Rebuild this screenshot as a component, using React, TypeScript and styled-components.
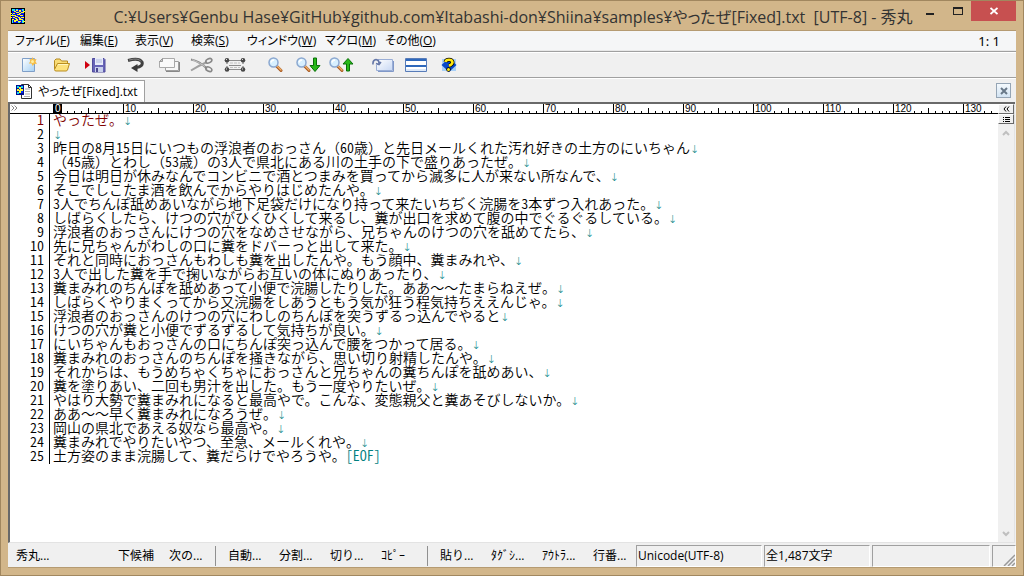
import React from "react";
import styled, { createGlobalStyle, css } from "styled-components";

const UI = `"Open Sans", "Noto Sans CJK JP", sans-serif`;

const GlobalStyle = createGlobalStyle`
  * { box-sizing: border-box; }
  body { margin: 0; background: #d2b68a; }
  button { font: inherit; color: inherit; border: 0; padding: 0; background: none; }
`;

const Window = styled.div`
  display: flex;
  flex-direction: column;
  min-height: 100vh;
  padding: 0 7px 7px;
  background: #d2b68a;
  border: 1px solid #a1875f;
  font-family: ${UI};
  font-size: 12px;
  color: #000;
`;

const TitleBar = styled.header`
  display: grid;
  grid-template-columns: 1fr auto 1fr;
  align-items: center;
  height: 29px;
  padding-left: 2px;
`;

const Title = styled.h1`
  margin: 2px 0 0;
  white-space: pre;
  font-family: ${UI};
  font-size: 16px;
  font-weight: 400;
  line-height: 24px;
  color: #333;
  font-feature-settings: "palt";
`;

const WindowButtons = styled.div`
  display: flex;
  align-self: flex-start;
  justify-self: end;
`;

const WindowButton = styled.button<{ $close?: boolean }>`
  display: flex;
  align-items: center;
  justify-content: center;
  width: ${(p) => (p.$close ? 45 : 27)}px;
  height: 20px;
  background: ${(p) => (p.$close ? "#c75050" : "none")};
`;

const Client = styled.div`
  flex: 1;
  display: flex;
  flex-direction: column;
  border-top: 1px solid #b59b72;
  border-bottom: 1px solid #b59b72;
  background: #f0f0f0;
`;

const MenuBar = styled.nav`
  display: flex;
  align-items: center;
  justify-content: space-between;
  height: 20px;
  padding: 0 16px 0 7px;
  background: #f5f6f7;
  border-bottom: 1px solid #e8e8e8;
`;

const MenuList = styled.div`
  display: grid;
  grid-template-columns: 65px 55px 56px 56px 78px 60px 60px;
`;

const MenuItem = styled.button`
  text-align: left;
  white-space: nowrap;
  line-height: 18px;
  font-feature-settings: "palt";
`;

const Caret = styled.span`
  font-family: "Noto Sans", sans-serif;
  font-size: 13px;
  line-height: 18px;
`;

const ToolBar = styled.div`
  display: flex;
  align-items: center;
  height: 27px;
  padding-left: 4px;
  border-top: 1px solid #a0a0a0;
  border-bottom: 1px solid #a0a0a0;
  box-shadow: inset 0 1px #fff;
`;

const ToolGroup = styled.div`
  display: flex;
  margin-right: 8px;
`;

const ToolButton = styled.button`
  display: flex;
  justify-content: center;
  align-items: center;
  width: 33px;
  height: 23px;
`;

const TabStrip = styled.div`
  display: flex;
  align-items: flex-end;
  justify-content: space-between;
  height: 24px;
  padding-right: 5px;
  border-top: 1px solid #fff;
`;

const Tab = styled.button`
  display: flex;
  align-items: center;
  gap: 5px;
  height: 22px;
  padding: 0 6px 0 7px;
  background: #fff;
  border: 1px solid #a0a0a0;
  border-left-color: #fff;
  border-bottom: 0;
  font-size: 12px;
  line-height: 20px;
  font-feature-settings: "palt";
`;

const CloseTab = styled.button`
  display: flex;
  align-items: center;
  justify-content: center;
  width: 15px;
  height: 15px;
  margin-bottom: 4px;
  background: linear-gradient(#f4f9fd, #d3e4f3);
  border: 1px solid #95a5b5;
`;

const Editor = styled.main`
  flex: 1;
  display: flex;
  margin-right: 1px;
  background: #fff;
  border-top: 2px solid #696969;
  border-left: 2px solid #696969;
  border-bottom: 1px solid #e3e3e3;
`;

const Document = styled.div`
  flex: 1;
  min-width: 0;
`;

const Ruler = styled.div`
  display: flex;
  height: 10px;
  overflow: hidden;
  border-bottom: 1px solid #000;
`;

const RulerStart = styled.div`
  flex: none;
  display: flex;
  width: 43px;
  padding-left: 1px;
`;

const RulerCell = styled.div`
  flex: none;
  width: 70px;
  height: 9px;
  border-left: 1px solid #000;
  background:
    linear-gradient(#000, #000) 34px 100% / 1px 5px no-repeat,
    repeating-linear-gradient(to right, transparent 0 6px, #000 6px 7px) 0 100% / 100% 2px no-repeat;
`;

const RulerLabel = styled.span<{ $current?: boolean }>`
  display: block;
  width: max-content;
  height: 9px;
  padding: 0 1px;
  font-family: "Liberation Sans", sans-serif;
  font-size: 10px;
  line-height: 9px;
  background: #fff;
  ${(p) =>
    p.$current &&
    css`
      color: #fff;
      background: #000;
    `}
`;

const Lines = styled.ol`
  margin: 0;
  padding: 0;
  list-style: none;
  font-family: "Noto Sans CJK JP", sans-serif;
  font-size: 14px;
  font-weight: 350;
  line-height: 10px;
`;

const Line = styled.li<{ $current?: boolean }>`
  display: flex;
  height: 14px;
  white-space: pre;
  color: ${(p) => (p.$current ? "#800000" : "#000")};
`;

const Half = styled.span`
  font-feature-settings: "hwid";
`;

const LineNumber = styled(Half)`
  flex: none;
  width: 40px;
  padding-right: 5px;
  text-align: right;
  border-right: 1px solid #000;
  margin-right: 3px;
`;

const EndOfFile = styled(Half)`
  color: #008080;
`;

const LineEnd = styled.span`
  color: #008080;
  font-family: "DejaVu Sans", sans-serif;
  font-size: 11px;
  line-height: 10px;
`;

const ScrollColumn = styled.div`
  display: flex;
  flex-direction: column;
  width: 17px;
  border-right: 1px solid #e3e3e3;
`;

const SmallButton = styled.button`
  display: flex;
  align-items: center;
  justify-content: center;
  width: 16px;
  height: 10px;
  background: #f0f0f0;
  border: 1px solid #fff;
  border-right-color: #696969;
  border-bottom-color: #696969;
`;

const Track = styled.div`
  flex: 1;
  display: flex;
  flex-direction: column;
  justify-content: space-between;
  align-items: center;
  padding: 6px 0 5px;
  background: #f0f0f0;
`;

const StatusBar = styled.footer`
  display: flex;
  align-items: stretch;
  height: 24px;
  padding-top: 2px;
`;

const Keys = styled.div`
  flex: 0 1 628px;
  display: flex;
  align-items: center;
  padding-left: 8px;
  overflow: hidden;
`;

const KeyButton = styled.button`
  width: 51px;
  height: 20px;
  text-align: left;
  white-space: nowrap;
  line-height: 20px;
`;

const KeyGroup = styled.div`
  flex: none;
  display: flex;
  ${KeyButton}:last-child {
    width: 39px;
  }
  & + & {
    margin-left: 7px;
    padding-left: 12px;
    border-left: 1px solid #909090;
  }
`;

const Panel = styled.div<{ $width?: number }>`
  flex: ${(p) => (p.$width ? `0 0 ${p.$width}px` : "1 1 0")};
  height: 22px;
  margin-right: 2px;
  padding-left: 1px;
  border: 1px solid #a0a0a0;
  border-right-color: #fff;
  border-bottom-color: #fff;
  line-height: 20px;
`;

const Grip = styled(Panel)`
  display: flex;
  align-items: flex-end;
  justify-content: flex-end;
  margin-right: 0;
`;

/* Application emblem: blue field with a yellow scrawl */
const Emblem = () => (
  <svg width="16" height="16" viewBox="0 0 16 16" shapeRendering="crispEdges">
    <path d="M1 0h14v16H1z" fill="#000" />
    <path d="M2 1h12v14H2z" fill="#0010e8" />
    <path d="M2 1h3v2H2zM6 1h2v1H6zM12 1h2v2h-2zM2 12h1v3H2zM12 12h2v3h-2zM2 6h1v2H2zM8 14h2v1H8z" fill="#20e8f0" />
    <path
      d="M4 3h2v1H4zM6 4h3v1H6zM9 2h2v2H9zM11 4h3v1h-3zM3 5h2v1H3zM7 6h3v1H7zM1 7h5v1H1zM9 5h2v1H9zM10 7h3v1h-3zM5 8h3v1H5zM3 9h2v1H3zM8 9h2v1H8zM11 9h3v1h-3zM5 10h2v1H5zM9 10h2v2H9zM2 11h2v1H2zM6 11h2v2H6zM4 12h2v2H4zM11 11h2v1h-2zM8 13h3v1H8zM0 5h2v1H0zM0 9h2v1H0zM13 3h2v1h-2zM13 13h2v1h-2zM6 2h2v1H6z"
      fill="#ffff20"
    />
  </svg>
);

const Lens = () => (
  <>
    <path d="M8.500 9l4.500 4.500" stroke="#a85820" strokeWidth="3" strokeLinecap="round" />
    <path d="M9 9l4 4" stroke="#efb068" strokeWidth="1.400" strokeLinecap="round" />
    <circle cx="5.500" cy="5.500" r="4.500" fill="#d8f0ff" stroke="#8ba8d0" strokeWidth="1.500" />
    <path d="M3 5.500Q3.500 3 6 3" fill="none" stroke="#fff" strokeWidth="1.400" />
  </>
);

const icons: Record<string, React.ReactElement> = {
  new: (
    <svg width="16" height="16" viewBox="0 0 16 16">
      <defs>
        <linearGradient id="paper" x1="0" y1="0" x2="1" y2="1">
          <stop offset="0" stopColor="#fff" />
          <stop offset="1" stopColor="#a4d0f4" />
        </linearGradient>
      </defs>
      <path d="M1.500 1.500h12v13h-12z" fill="url(#paper)" stroke="#7f9fc8" />
      <path d="M11.500 0l1.200 2.300 2.800-.3-1 2.500 1.500 2.300-2.700.1-1.600 2-1.200-2.300-2.700-.2 1.500-2.200-.8-2.300 2.200.3z" fill="#f5bd4a" />
      <circle cx="11.500" cy="4.600" r="1.500" fill="#fff0a0" />
    </svg>
  ),
  open: (
    <svg width="18" height="16" viewBox="0 0 18 16">
      <path d="M1.500 12V3.500L3 2h4l1.500 2h6V6" fill="#f9dc75" stroke="#b58a22" />
      <path d="M1.500 12.500L4.500 6.500h12l-2 6.500q-.5 1-1.500 1H3q-1.500 0-1.500-1.500z" fill="#fde27c" stroke="#b98d20" />
      <path d="M5 7.500h10" stroke="#fff6c0" />
    </svg>
  ),
  save: (
    <svg width="22" height="16" viewBox="0 0 22 16">
      <path d="M1 4L6 8 1 12z" fill="#d00010" />
      <path d="M8.500 1.500h11.500l1 1v12.500H8.500z" fill="#6864b8" stroke="#504c9c" />
      <path d="M11 1h8v7h-8z" fill="#e8ecfa" />
      <path d="M12 3h6M12 5h6" stroke="#b0b8dc" />
      <path d="M11 10h8v5h-8z" fill="#c8d0ec" />
      <path d="M12 11h2v4h-2z" fill="#4c4890" />
    </svg>
  ),
  undo: (
    <svg width="20" height="16" viewBox="0 0 20 16">
      <path d="M2 3.500Q13 .5 16 5q1.500 4.500-6 5.500" fill="none" stroke="#404040" strokeWidth="3" />
      <path d="M11.500 7v8L5 11z" fill="#383838" />
      <path d="M3 3Q13 .5 15 4.500" fill="none" stroke="#858585" strokeWidth="1" />
    </svg>
  ),
  copy: (
    <svg width="22" height="16" viewBox="0 0 22 16">
      <path d="M7.500 4.500h13v9h-13z" fill="#f8f8f8" stroke="#a0a0a0" />
      <path d="M21.500 5v9.500H8" fill="none" stroke="#888" />
      <path d="M4.500 1.500h12v9h-15v-6z" fill="#fafafa" stroke="#aaa" />
      <path d="M4.500 1.500v3h-3z" fill="#ccc" stroke="#999" />
    </svg>
  ),
  cut: (
    <svg width="24" height="16" viewBox="0 0 24 16">
      <path d="M1 2.500Q9 4 17 11.500" fill="none" stroke="#888" strokeWidth="2" />
      <path d="M1 13.500Q8 9 17 5" fill="none" stroke="#a0a0a0" strokeWidth="2" />
      <path d="M2 2.700Q9 5 15 9.500" fill="none" stroke="#ddd" strokeWidth=".7" />
      <ellipse cx="18.800" cy="3.800" rx="3.200" ry="2" transform="rotate(-25 18.800 3.800)" fill="none" stroke="#888" strokeWidth="1.600" />
      <ellipse cx="18.800" cy="12.200" rx="3.200" ry="2" transform="rotate(25 18.800 12.200)" fill="none" stroke="#888" strokeWidth="1.600" />
    </svg>
  ),
  select: (
    <svg width="22" height="16" viewBox="0 0 22 16">
      <path d="M4 3.500h14M5 8.500h12M4 12.500h14" stroke="#8c8c8c" />
      <path d="M6 6h10M6 10.500h10" stroke="#c0c0c0" strokeWidth="1" strokeDasharray="3 1" />
      <path d="M3 5v2M19 5v2M3 9v2M19 9v2" stroke="#aaa" strokeWidth="2" />
      <circle cx="3" cy="3.200" r="2.300" fill="#484848" />
      <circle cx="19" cy="3.200" r="2.300" fill="#484848" />
      <circle cx="3" cy="12.500" r="2.300" fill="#484848" />
      <circle cx="19" cy="12.500" r="2.300" fill="#484848" />
      <path d="M2 2h1v1H2zM18 2h1v1h-1zM2 11.500h1v1H2zM18 11.500h1v1h-1z" fill="#ddd" />
    </svg>
  ),
  find: (
    <svg width="15" height="16" viewBox="0 0 15 16">
      <Lens />
    </svg>
  ),
  findDown: (
    <svg width="25" height="16" viewBox="0 0 25 16">
      <Lens />
      <path d="M17.500 1h3v7.500h3.500L19 14.500 14 8.500h3.500z" fill="#28b818" stroke="#087008" />
    </svg>
  ),
  findUp: (
    <svg width="25" height="16" viewBox="0 0 25 16">
      <Lens />
      <path d="M17.500 14h3V7h3.500L19 1.500 14 7h3.500z" fill="#28b818" stroke="#087008" />
    </svg>
  ),
  jump: (
    <svg width="22" height="16" viewBox="0 0 22 16">
      <defs>
        <linearGradient id="card" x1="0" y1="0" x2="1" y2="1">
          <stop offset="0" stopColor="#fff" />
          <stop offset="1" stopColor="#c8d8f4" />
        </linearGradient>
      </defs>
      <path d="M6 2.500h14.500v11h-16V8" fill="url(#card)" stroke="#9aaed6" />
      <path d="M21.500 4v10.500H6" fill="none" stroke="#8098c8" />
      <path d="M1 7.500Q.5 3 4 2.500 7.500 3 7 7M4 6.500l3 1 2-2.500" fill="none" stroke="#6678a8" strokeWidth="1.600" />
    </svg>
  ),
  split: (
    <svg width="22" height="16" viewBox="0 0 22 16">
      <path d="M.5 1.500h21v13H.5z" fill="#fff" stroke="#587cb8" />
      <path d="M1 2h20v2H1zM1 8h20v2H1z" fill="#2e68bc" />
      <path d="M1 12h20v2H1z" fill="#dce8f8" />
    </svg>
  ),
  help: (
    <svg width="16" height="16" viewBox="0 0 16 16">
      <path d="M1 2h14v12H1z" fill="#a8d0f8" />
      <path d="M8 1l7.500 7-7.500 7L.5 8z" fill="#0848c8" />
      <path d="M4.500 5Q5 2.800 8 2.800t3.500 2.400Q11.500 7.200 8 8.800" fill="none" stroke="#000" strokeWidth="4" />
      <circle cx="7.500" cy="12.500" r="2.200" fill="#000" />
      <path d="M4.500 5Q5 2.800 8 2.800t3.500 2.400Q11.500 7.200 8 8.800" fill="none" stroke="#ffe810" strokeWidth="2.600" />
      <circle cx="7.500" cy="12.500" r="1.500" fill="#ffe810" />
    </svg>
  ),
};

const TabIcon = () => (
  <svg width="17" height="16" viewBox="0 0 17 16">
    <path d="M5.500.5h7l3 3v11h-10z" fill="#fff" stroke="#333" />
    <path d="M12.500.5v3h3" fill="none" stroke="#333" />
    <path d="M9 5h5M9 7.500h5M9 10h5M8 12.500h6" stroke="#b0b0b0" />
    <path d="M0 1h8v10H0z" fill="#001090" />
    <path d="M1 2h2v2H1zM5 2h2v2H5zM1 8h2v2H1z" fill="#18d8f0" />
    <path d="M3 3h2v2h2v2H5v2H3V7H1V5h2z" fill="#ffff20" />
    <path d="M5 7h2v2H5zM3 5h1v1H3z" fill="#0030ff" />
  </svg>
);

const toolGroups = [
  [["new", "新規作成"], ["open", "開く"], ["save", "上書き保存"]],
  [["undo", "やり直し"], ["copy", "コピー"], ["cut", "切り抜き"], ["select", "範囲選択"]],
  [["find", "検索"], ["findDown", "下候補"], ["findUp", "上候補"]],
  [["jump", "ジャンプ"], ["split", "分割"], ["help", "ヘルプ"]],
];

const menus = [
  ["ファイル", "F"],
  ["編集", "E"],
  ["表示", "V"],
  ["検索", "S"],
  ["ウィンドウ", "W"],
  ["マクロ", "M"],
  ["その他", "O"],
];

const keyGroups = [
  ["秀丸...", "", "下候補", "次の..."],
  ["自動...", "分割...", "切り...", "ｺﾋﾟｰ"],
  ["貼り...", "ﾀｸﾞｼ...", "ｱｳﾄﾗ...", "行番..."],
];

const rulerMarks = Array.from({ length: 14 }, (_, i) => i * 10);

const lines = [
  "やったぜ。",
  "",
  "昨日の8月15日にいつもの浮浪者のおっさん（60歳）と先日メールくれた汚れ好きの土方のにいちゃん",
  "（45歳）とわし（53歳）の3人で県北にある川の土手の下で盛りあったぜ。",
  "今日は明日が休みなんでコンビニで酒とつまみを買ってから滅多に人が来ない所なんで、",
  "そこでしこたま酒を飲んでからやりはじめたんや。",
  "3人でちんぽ舐めあいながら地下足袋だけになり持って来たいちぢく浣腸を3本ずつ入れあった。",
  "しばらくしたら、けつの穴がひくひくして来るし、糞が出口を求めて腹の中でぐるぐるしている。",
  "浮浪者のおっさんにけつの穴をなめさせながら、兄ちゃんのけつの穴を舐めてたら、",
  "先に兄ちゃんがわしの口に糞をドバーっと出して来た。",
  "それと同時におっさんもわしも糞を出したんや。もう顔中、糞まみれや、",
  "3人で出した糞を手で掬いながらお互いの体にぬりあったり、",
  "糞まみれのちんぽを舐めあって小便で浣腸したりした。ああ～～たまらねえぜ。",
  "しばらくやりまくってから又浣腸をしあうともう気が狂う程気持ちええんじゃ。",
  "浮浪者のおっさんのけつの穴にわしのちんぽを突うずるっ込んでやると",
  "けつの穴が糞と小便でずるずるして気持ちが良い。",
  "にいちゃんもおっさんの口にちんぽ突っ込んで腰をつかって居る。",
  "糞まみれのおっさんのちんぽを掻きながら、思い切り射精したんや。",
  "それからは、もうめちゃくちゃにおっさんと兄ちゃんの糞ちんぽを舐めあい、",
  "糞を塗りあい、二回も男汁を出した。もう一度やりたいぜ。",
  "やはり大勢で糞まみれになると最高やで。こんな、変態親父と糞あそびしないか。",
  "ああ～～早く糞まみれになろうぜ。",
  "岡山の県北であえる奴なら最高や。",
  "糞まみれでやりたいやつ、至急、メールくれや。",
  "土方姿のまま浣腸して、糞だらけでやろうや。",
];

/* ASCII digits take half of a full-width cell */
const withHalfDigits = (text: string) =>
  text.split(/(\d+)/).map((part, i) => (i % 2 ? <Half key={i}>{part}</Half> : part));

export default function App() {
  return (
    <Window>
      <GlobalStyle />
      <TitleBar>
        <Emblem />
        <Title>{"C:¥Users¥Genbu Hase¥GitHub¥github.com¥Itabashi-don¥Shiina¥samples¥やったぜ[Fixed].txt  [UTF-8] - 秀丸"}</Title>
        <WindowButtons>
          <WindowButton aria-label="最小化">
            <svg width="9" height="10"><path d="M0 7h8v2H0z" fill="#222" /></svg>
          </WindowButton>
          <WindowButton aria-label="最大化">
            <svg width="10" height="8"><path d="M0 0h10v8H0zM1 2v5h8V2z" fill="#222" fillRule="evenodd" /></svg>
          </WindowButton>
          <WindowButton $close aria-label="閉じる">
            <svg width="8" height="8" viewBox="0 0 8 8"><path d="M.5 1l7 6M7.500 1l-7 6" stroke="#fff" strokeWidth="1.800" /></svg>
          </WindowButton>
        </WindowButtons>
      </TitleBar>

      <Client>
        <MenuBar>
          <MenuList>
            {menus.map(([label, key]) => (
              <MenuItem key={key}>
                {label}(<u>{key}</u>)
              </MenuItem>
            ))}
          </MenuList>
          <Caret>1: 1</Caret>
        </MenuBar>

        <ToolBar>
          {toolGroups.map((group, i) => (
            <ToolGroup key={i}>
              {group.map(([id, label]) => (
                <ToolButton key={id} aria-label={label}>
                  {icons[id]}
                </ToolButton>
              ))}
            </ToolGroup>
          ))}
        </ToolBar>

        <TabStrip>
          <Tab>
            <TabIcon />
            やったぜ[Fixed].txt
          </Tab>
          <CloseTab aria-label="タブを閉じる">
            <svg width="8" height="8" viewBox="0 0 8 8"><path d="M1 1l6 6M7 1L1 7" stroke="#687888" strokeWidth="2" /></svg>
          </CloseTab>
        </TabStrip>

        <Editor>
          <Document>
            <Ruler>
              <RulerStart>
                <svg width="7" height="8"><path d="M.5 1.500l2.500 2.500L.5 6.500M3.500 1.500L6 4 3.500 6.500" fill="none" stroke="#888" /></svg>
              </RulerStart>
              {rulerMarks.map((n) => (
                <RulerCell key={n}>
                  <RulerLabel $current={n === 0}>{n}</RulerLabel>
                </RulerCell>
              ))}
            </Ruler>
            <Lines>
              {lines.map((text, i) => (
                <Line key={i} $current={i === 0}>
                  <LineNumber>{i + 1}</LineNumber>
                  <span>
                    {withHalfDigits(text)}
                    {i < lines.length - 1 ? <LineEnd>↓</LineEnd> : <EndOfFile>[EOF]</EndOfFile>}
                  </span>
                </Line>
              ))}
            </Lines>
          </Document>
          <ScrollColumn>
            <SmallButton aria-label="ルーラー">
              <svg width="7" height="6"><path d="M3 .5L1 3l2 2.500M6 .5L4 3l2 2.500" fill="none" stroke="#000" /></svg>
            </SmallButton>
            <SmallButton aria-label="一覧">
              <svg width="7" height="5" shapeRendering="crispEdges"><path d="M0 0h1v1H0zM2 0h5v1H2zM0 2h1v1H0zM2 2h5v1H2zM0 4h1v1H0zM2 4h5v1H2z" /></svg>
            </SmallButton>
            <Track>
              <svg width="8" height="6"><path d="M1 5l3-3 3 3" fill="none" stroke="#bfbfbf" strokeWidth="2" /></svg>
              <svg width="8" height="6"><path d="M1 1l3 3 3-3" fill="none" stroke="#bfbfbf" strokeWidth="2" /></svg>
            </Track>
          </ScrollColumn>
        </Editor>

        <StatusBar>
          <Keys>
            {keyGroups.map((group, i) => (
              <KeyGroup key={i}>
                {group.map((label, j) => (
                  <KeyButton key={j} aria-label={label || "未定義"}>{label}</KeyButton>
                ))}
              </KeyGroup>
            ))}
          </Keys>
          <Panel $width={126}>Unicode(UTF-8)</Panel>
          <Panel $width={106}>全1,487文字</Panel>
          <Panel />
          <Grip $width={24}>
            <svg width="12" height="12"><path d="M1 12L12 1M5 12l7-7M9 12l3-3" stroke="#999" strokeWidth="1.500" /></svg>
          </Grip>
        </StatusBar>
      </Client>
    </Window>
  );
}
